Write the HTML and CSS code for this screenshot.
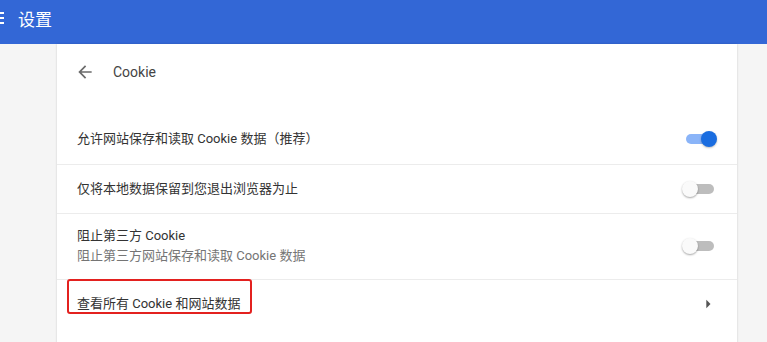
FILE: index.html
```html
<!DOCTYPE html>
<html lang="zh">
<head>
<meta charset="utf-8">
<title>设置 - Cookie</title>
<link rel="stylesheet" href="styles.css">
</head>
<body>
<header class="topbar">
  <svg class="menu-icon" width="5" height="44" viewBox="0 0 5 44" aria-hidden="true">
    <rect x="0" y="12" width="4" height="2" fill="#fff"/>
    <rect x="0" y="17" width="4" height="2" fill="#fff"/>
    <rect x="0" y="22" width="4" height="2" fill="#fff"/>
  </svg>
  <h1 class="topbar-title">设置</h1>
</header>
<main class="page">
  <section class="card">
    <div class="subpage-title">
      <svg class="back-icon" width="20" height="20" viewBox="0 0 24 24" aria-hidden="true">
        <path d="M20 11H7.83l5.59-5.59L12 4l-8 8 8 8 1.41-1.41L7.83 13H20v-2z" fill="#6b6b6b"/>
      </svg>
      <span class="subpage-name">Cookie</span>
    </div>
    <div class="row first">
      <div class="label">允许网站保存和读取 Cookie 数据（推荐）</div>
      <div class="toggle on"><span class="track"></span><span class="knob"></span></div>
    </div>
    <div class="row">
      <div class="label">仅将本地数据保留到您退出浏览器为止</div>
      <div class="toggle"><span class="track"></span><span class="knob"></span></div>
    </div>
    <div class="row tall">
      <div class="label">
        <div>阻止第三方 Cookie</div>
        <div class="secondary">阻止第三方网站保存和读取 Cookie 数据</div>
      </div>
      <div class="toggle"><span class="track"></span><span class="knob"></span></div>
    </div>
    <div class="row link">
      <div class="label">查看所有 Cookie 和网站数据</div>
      <svg class="arrow-icon" width="20" height="20" viewBox="0 0 24 24" aria-hidden="true">
        <path d="M10 17l5-5-5-5v10z" fill="#555"/>
      </svg>
      <span class="highlight"></span>
    </div>
  </section>
</main>
</body>
</html>
```

FILE: styles.css
```css
html, body {
  margin: 0;
  padding: 0;
}
body {
  background: #f5f5f5;
  font-family: Roboto, "Noto Sans CJK SC", "DejaVu Sans", sans-serif;
  color: #333;
  height: 342px;
  overflow: hidden;
}
.topbar {
  height: 44px;
  background: #3367d6;
  display: flex;
  align-items: center;
  color: #fff;
}
.menu-icon {
  display: block;
  flex: none;
}
.topbar-title {
  margin: 0 0 0 13px;
  font-size: 17px;
  font-weight: 400;
  line-height: 40px;
  padding-bottom: 4px;
}
.page {
  padding-left: 57px;
}
.card {
  width: 680px;
  min-height: 300px;
  background: #fff;
  box-shadow: 0 0 2px rgba(0, 0, 0, 0.18);
}
.subpage-title {
  height: 56px;
  display: flex;
  align-items: center;
  padding-left: 18px;
  margin-bottom: 14px;
}
.back-icon {
  display: block;
}
.subpage-name {
  margin-left: 18px;
  font-size: 14px;
  color: #444;
}
.row {
  position: relative;
  display: flex;
  align-items: center;
  justify-content: space-between;
  min-height: 48px;
  padding: 0 20px;
  border-top: 1px solid #ececec;
  font-size: 13px;
  line-height: 20px;
}
.row.first {
  border-top: none;
  min-height: 50px;
}
.row.tall {
  min-height: 64px;
  padding-bottom: 1px;
}
.row.link {
  padding-right: 19px;
}
.secondary {
  color: #757575;
}
.toggle {
  position: relative;
  width: 35px;
  height: 16px;
  flex: none;
}
.track {
  position: absolute;
  left: 4px;
  right: 3px;
  top: 3px;
  height: 10px;
  border-radius: 5px;
  background: #bdbdbd;
}
.knob {
  position: absolute;
  left: 0;
  top: 0;
  width: 16px;
  height: 16px;
  border-radius: 50%;
  background: #fafafa;
  box-shadow: 0 1px 2px rgba(0, 0, 0, 0.35);
}
.toggle.on .track {
  background: #8ab4f8;
}
.toggle.on .knob {
  left: 19px;
  background: #1a6de0;
  box-shadow: 0 1px 2px rgba(0, 0, 0, 0.25);
}
.arrow-icon {
  display: block;
  flex: none;
}
.highlight {
  position: absolute;
  left: 10px;
  top: -1px;
  width: 181px;
  height: 31px;
  border: 2.5px solid #e3211f;
  border-radius: 3px;
}
```
